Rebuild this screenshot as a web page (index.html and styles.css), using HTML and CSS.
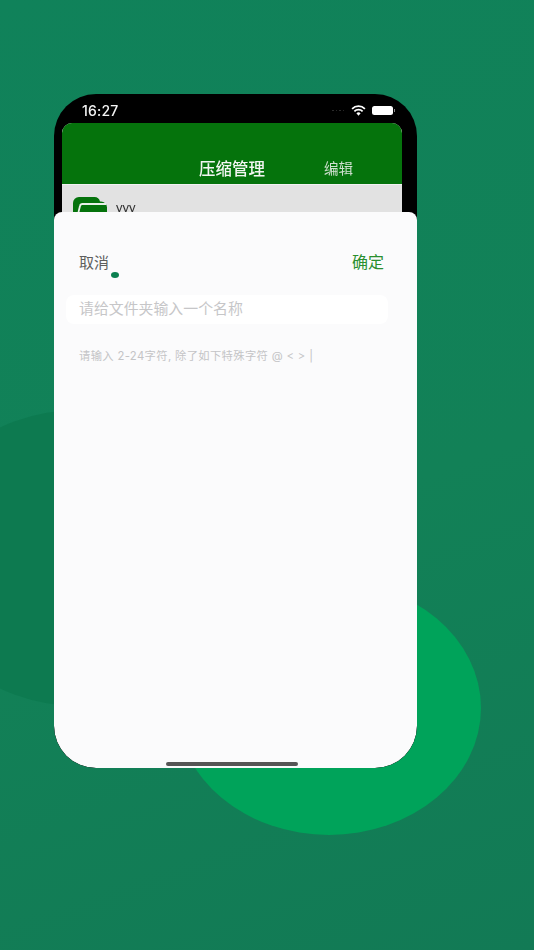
FILE: index.html
```html
<!DOCTYPE html>
<html lang="zh">
<head>
<meta charset="utf-8">
<title>压缩管理</title>
<link rel="stylesheet" href="styles.css">
</head>
<body>
<main class="stage">
  <div class="blob blob-dark"></div>
  <div class="blob blob-light"></div>
  <section class="phone">
    <header class="status">
      <span class="time">16:27</span>
      <span class="status-icons">
        <span class="signal"><i></i><i></i><i></i><i></i></span>
        <svg class="wifi" viewBox="0 0 16 12" width="15" height="11"><path d="M8 11.6 5.700 9a3.300 3.300 0 0 1 4.600 0Z" fill="#fff"/><path d="M3.500 6.900a6.400 6.400 0 0 1 9 0M1 4.200a10 10 0 0 1 14 0" fill="none" stroke="#fff" stroke-width="1.900"/></svg>
        <span class="battery"></span>
      </span>
    </header>
    <div class="app">
      <div class="nav">
        <span class="nav-title">压缩管理</span>
        <span class="nav-edit">编辑</span>
      </div>
      <div class="row">
        <svg class="folder" viewBox="0 0 34 26" width="34" height="26"><path d="M0 6a6 6 0 0 1 6-6h15a6 6 0 0 1 6 4.500h1a6 6 0 0 1 6 6V26H0Z" fill="#05730c"/><path d="M5.500 15 7 9a2.500 2.500 0 0 1 2.500-2H33" fill="none" stroke="#e8f0e8" stroke-width="1.800"/></svg>
        <span class="row-name">yyy</span>
      </div>
    </div>
    <div class="sheet">
      <div class="actions">
        <span class="cancel">取消</span>
        <span class="confirm">确定</span>
      </div>
      <div class="dot"></div>
      <div class="field">请给文件夹输入一个名称</div>
      <p class="hint">请输入 2-24字符, 除了如下特殊字符 @ &lt; &gt; |</p>
      <div class="home"></div>
    </div>
  </section>
</main>
</body>
</html>
```
FILE: styles.css
```css
* { box-sizing: border-box; }
html, body { margin: 0; padding: 0; }
body { font-family: "Liberation Sans", "Noto Sans CJK SC", sans-serif; }
.stage {
  position: relative;
  width: 534px;
  height: 950px;
  padding: 94px 0 0 54px;
  overflow: hidden;
  background: linear-gradient(160deg, #10825a 0%, #128157 55%, #127a55 100%);
}
.blob { position: absolute; border-radius: 50%; }
.blob-dark { left: -90px; top: 410px; width: 340px; height: 296px; background: #0d7a50; }
.blob-light { left: 177px; top: 581px; width: 304px; height: 254px; background: #00a35a; }
.phone {
  position: relative;
  width: 363px;
  height: 674px;
  border-radius: 42px;
  background: #000;
  overflow: hidden;
  filter: blur(0.35px);
}
.status {
  height: 29px;
  display: flex;
  justify-content: space-between;
  align-items: center;
  padding: 4px 24px 0 28px;
  color: #f4f4f4;
}
.time { font-family: Inter, sans-serif; font-size: 14px; font-weight: 500; letter-spacing: 0.2px; }
.status-icons { display: flex; align-items: center; gap: 6px; }
.signal { display: flex; gap: 2px; margin-right: 1px; }
.signal i { width: 1.500px; height: 1.500px; background: #333; border-radius: 50%; }
.wifi { display: block; }
.battery {
  position: relative;
  width: 21px;
  height: 9px;
  border-radius: 2.500px;
  background: #fff;
}
.battery::after {
  content: "";
  position: absolute;
  right: -2px;
  top: 3px;
  width: 1.500px;
  height: 3px;
  background: #8a8a8a;
}
.app {
  margin: 0 15px 0 8px;
  height: 140px;
  border-radius: 10px 10px 0 0;
  overflow: hidden;
  background: #e2e2e2;
}
.nav {
  height: 61px;
  background: #05730c;
  display: flex;
  justify-content: flex-end;
  align-items: flex-end;
  gap: 59px;
  padding: 0 49px 5px 0;
  box-shadow: 0 1px 0 #f2f2f2;
}
.nav-title { color: #f2f6f2; font-size: 16.500px; font-weight: 500; line-height: 20px; }
.nav-edit { color: #cfe0cf; font-size: 14.500px; line-height: 20px; }
.row { display: flex; align-items: flex-start; gap: 9px; padding: 13px 0 0 11px; }
.folder { flex: none; }
.row-name { font-size: 13px; color: #333; line-height: 16px; margin-top: 3px; }
.sheet {
  position: absolute;
  left: 0;
  right: 0;
  top: 118px;
  bottom: 0;
  background: #fbfbfc;
  border-radius: 8px 8px 42px 42px;
  padding: 41px 0 0 12px;
}
.actions {
  display: flex;
  justify-content: space-between;
  padding: 0 33px 0 13px;
  font-size: 15px;
  line-height: 20px;
}
.cancel { color: #5e5e5e; }
.confirm { color: #2a8f2e; font-size: 16px; }
.dot { width: 8px; height: 6px; margin: -1px 0 0 45px; border-radius: 50%; background: #0a8050; }
.field {
  width: 322px;
  height: 29px;
  margin: 17px 0 0 0;
  padding-left: 13px;
  border-radius: 8px;
  background: #fff;
  color: #c6c6c8;
  font-size: 14.900px;
  line-height: 29px;
}
.hint {
  margin: 24px 0 0 13px;
  color: #c4c4c6;
  font-family: Inter, "Noto Sans CJK SC", sans-serif;
  font-size: 11.300px;
  letter-spacing: 0.35px;
  line-height: 16px;
}
.home {
  position: absolute;
  left: 112px;
  bottom: 2px;
  width: 132px;
  height: 4px;
  border-radius: 2px;
  background: #555;
}
```
